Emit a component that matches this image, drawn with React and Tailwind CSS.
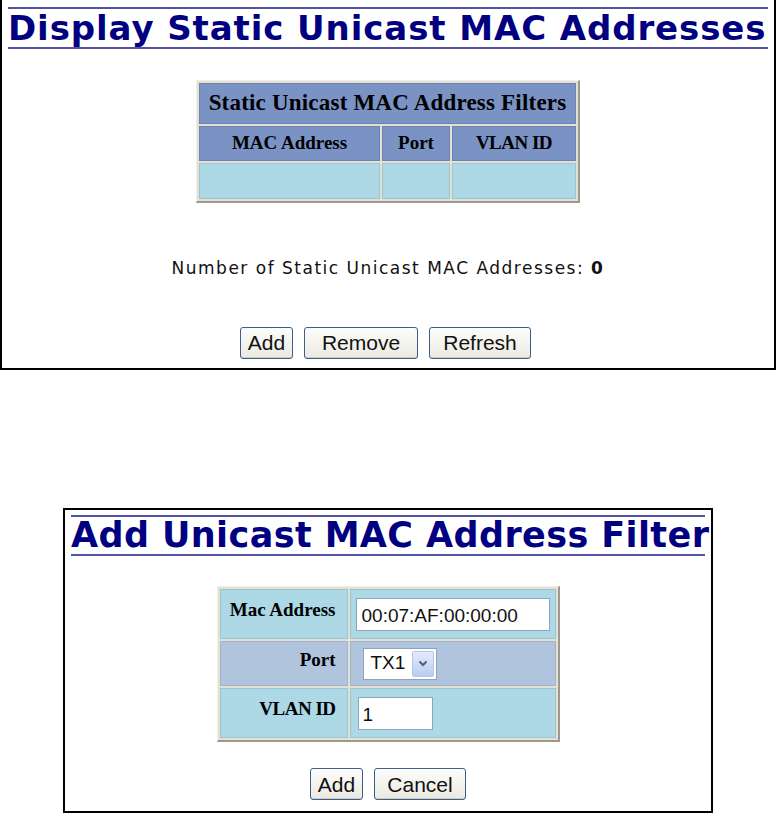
import React from 'react'

const sans = { fontFamily: '"DejaVu Sans", Verdana, sans-serif' }
const serif = { fontFamily: '"Liberation Serif", "Times New Roman", serif' }
const arial = { fontFamily: '"Liberation Sans", Arial, sans-serif' }

const Btn = ({ children, w }) => (
  <button
    style={arial}
    className={`h-[32px] ${w} rounded-[3px] border border-[#3c5f8c] bg-gradient-to-b from-[#fdfdfb] to-[#ebe9e1] text-[21px] leading-none text-[#111] shadow-[inset_0_-1px_0_#d0ccbc]`}
  >
    {children}
  </button>
)

const Headline = ({ children, size }) => (
  <div className="border-y-2 border-[#5353a6]">
    <h1 style={sans} className={`${size} font-bold leading-none text-[#000080] whitespace-nowrap`}>{children}</h1>
  </div>
)

const App = () => {
  return (
    <div className="w-[776px] h-[813px] bg-white">
      {/* display panel */}
      <div className="h-[370px] border-x-2 border-b-2 border-black px-[6px] pt-[7px] flex flex-col">
        <Headline size="text-[34px] py-[2px] tracking-[0.9px]">Display Static Unicast MAC Addresses</Headline>

        <div className="mt-[31px] flex justify-center">
          <table style={serif} className="w-[384px] border-separate border-spacing-[2px] bg-[#e4e1d3] border-r-2 border-b-2 border-r-[#9c9a90] border-b-[#9c9a90] border-l border-t border-[#f2f0e8]">
            <tbody>
              <tr>
                <td colSpan={3} className="h-[41px] bg-[#7b93c4] text-center text-[23px] tracking-[0.2px] font-bold text-black border border-[#6d84b3]">Static Unicast MAC Address Filters</td>
              </tr>
              <tr className="text-[19px] font-bold text-black">
                <td className="h-[35px] w-[181px] bg-[#7b93c4] text-center border border-[#6d84b3]">MAC Address</td>
                <td className="w-[68px] bg-[#7b93c4] text-center border border-[#6d84b3]">Port</td>
                <td className="bg-[#7b93c4] text-center border border-[#6d84b3] tracking-[-0.5px]">VLAN ID</td>
              </tr>
              <tr>
                <td className="h-[36px] bg-[#add8e6] border border-[#9cc5d3]"></td>
                <td className="bg-[#add8e6] border border-[#9cc5d3]"></td>
                <td className="bg-[#add8e6] border border-[#9cc5d3]"></td>
              </tr>
            </tbody>
          </table>
        </div>

        <p style={sans} className="mt-[53px] text-center text-[17px] tracking-[1.5px] text-[#111]">
          Number of Static Unicast MAC Addresses: <b>0</b>
        </p>

        <div className="mt-[45px] flex justify-center gap-[11px] pr-[5px]">
          <Btn w="w-[53px]">Add</Btn>
          <Btn w="w-[114px]">Remove</Btn>
          <Btn w="w-[102px]">Refresh</Btn>
        </div>
      </div>

      {/* add panel */}
      <div className="mt-[138px] ml-[63px] w-[650px] h-[305px] border-2 border-black px-[6px] pt-[5px] flex flex-col">
        <Headline size="text-[35px] py-[1px] tracking-[0.4px]">Add Unicast MAC Address Filter</Headline>

        <div className="mt-[30px] flex justify-center">
          <table style={serif} className="w-[343px] border-separate border-spacing-[2px] bg-[#e4e1d3] border-r-2 border-b-2 border-r-[#9c9a90] border-b-[#9c9a90] border-l border-t border-[#f2f0e8]">
            <tbody className="text-[19px] font-bold text-black">
              <tr>
                <td className="h-[50px] w-[130px] bg-[#add8e6] text-right align-top pt-[6px] pr-[11px] border border-[#9cc5d3]">Mac Address</td>
                <td className="bg-[#add8e6] px-[5px] border border-[#9cc5d3]">
                  <div style={arial} className="h-[33px] w-[194px] border border-[#8ba5bf] bg-white text-[19px] font-normal leading-[33px] px-[5px] text-[#111]">00:07:AF:00:00:00</div>
                </td>
              </tr>
              <tr>
                <td className="h-[45px] bg-[#b0c4de] text-right align-top pt-[4px] pr-[11px] border border-[#a0b2cc]">Port</td>
                <td className="bg-[#b0c4de] pl-[12px] border border-[#a0b2cc]">
                  <div style={arial} className="h-[32px] w-[74px] border border-[#8ba5bf] bg-white flex items-center text-[19px] font-normal text-[#111]">
                    <span className="pl-[7px] flex-1">TX1</span>
                    <span className="mr-[2px] h-[26px] w-[22px] rounded-[2px] bg-gradient-to-b from-[#e4ecfb] to-[#bccbf0] border border-[#b6c6ea] flex items-center justify-center">
                      <svg width="10" height="7" viewBox="0 0 10 7"><path d="M1.5 1.5 L5 5 L8.5 1.5" fill="none" stroke="#4d6185" strokeWidth="2" /></svg>
                    </span>
                  </div>
                </td>
              </tr>
              <tr>
                <td className="h-[50px] bg-[#add8e6] text-right align-top pt-[6px] pr-[11px] border border-[#9cc5d3] tracking-[-0.5px]">VLAN ID</td>
                <td className="bg-[#add8e6] px-[7px] border border-[#9cc5d3]">
                  <div style={arial} className="h-[33px] w-[75px] border border-[#8ba5bf] bg-white text-[19px] font-normal leading-[33px] px-[4px] text-[#111]">1</div>
                </td>
              </tr>
            </tbody>
          </table>
        </div>

        <div className="mt-[26px] flex justify-center gap-[11px]">
          <Btn w="w-[53px]">Add</Btn>
          <Btn w="w-[92px]">Cancel</Btn>
        </div>
      </div>
    </div>
  )
}

export default App
